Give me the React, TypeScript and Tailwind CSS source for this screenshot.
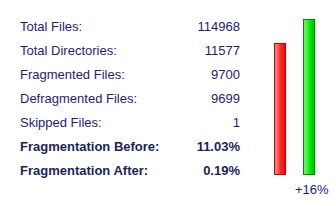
import React from "react";

type Row = { label: string; value: string; bold?: boolean };

const rows: Row[] = [
  { label: "Total Files:", value: "114968" },
  { label: "Total Directories:", value: "11577" },
  { label: "Fragmented Files:", value: "9700" },
  { label: "Defragmented Files:", value: "9699" },
  { label: "Skipped Files:", value: "1" },
  { label: "Fragmentation Before:", value: "11.03%", bold: true },
  { label: "Fragmentation After:", value: "0.19%", bold: true },
];

export default function App() {
  return (
    <div
      className="flex w-[336px] h-[206px] bg-white pt-[15px] pl-[20px] text-[13px] text-[#1c1c7c]"
      style={{ fontFamily: '"Liberation Sans", Arial, sans-serif' }}
    >
      <div className="w-[220px]">
        {rows.map((row) => (
          <div
            key={row.label}
            className={`flex justify-between h-6 leading-6 ${row.bold ? "font-bold text-[#1a1f5e]" : ""}`}
          >
            <span>{row.label}</span>
            <span>{row.value}</span>
          </div>
        ))}
      </div>
      <div className="ml-[34px] flex flex-col">
        <div className="flex items-end gap-[17px] h-[160px]">
          <div className="w-3 h-[132px] border border-[#c80000] bg-gradient-to-r from-[#ff8a8a] via-[#ff2a2a] to-[#f00000]" />
          <div className="w-3 h-[156px] border border-[#008a00] bg-gradient-to-r from-[#5cff5c] via-[#10ee10] to-[#00c000]" />
        </div>
        <div className="mt-[3px] pl-[21px] h-6 leading-6 whitespace-nowrap">+16%</div>
      </div>
    </div>
  );
}
